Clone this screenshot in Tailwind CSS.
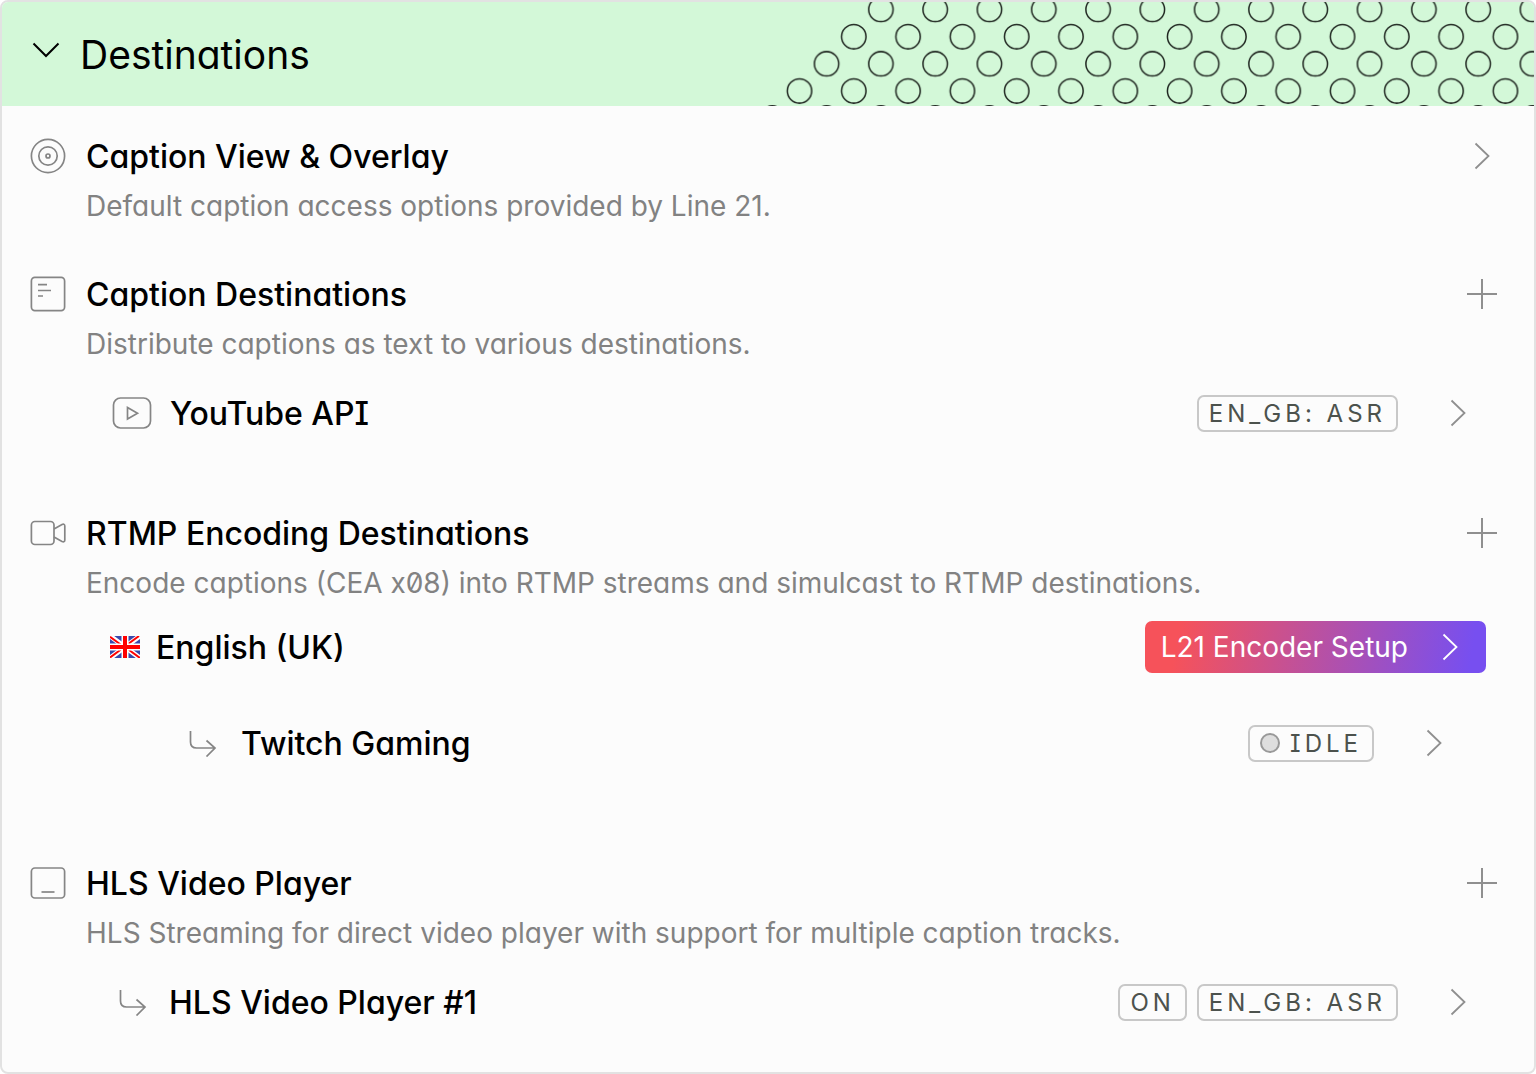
<!DOCTYPE html>
<html lang="en">
  <head>
    <meta charset="UTF-8" />
    <meta name="viewport" content="width=device-width, initial-scale=1.0" />
    <title>Destinations</title>
    <script src="https://cdn.jsdelivr.net/npm/@tailwindcss/browser@4"></script>
    <style>
      body {
        font-family: "Inter", sans-serif;
        font-feature-settings: "cv11", "cv08", "zero";
      }
    </style>
  </head>
  <body class="bg-white text-black">
    <!-- Shared icons -->
    <svg class="hidden">
      <symbol id="chevron" viewBox="0 0 32 32">
        <path d="M9.500 3.500l13 12.500-13 12.500" fill="none" stroke="currentColor" stroke-width="1.800" />
      </symbol>
      <symbol id="plus" viewBox="0 0 32 32">
        <path d="M16 1v30M1 16h30" fill="none" stroke="currentColor" stroke-width="2" />
      </symbol>
      <symbol id="branch" viewBox="0 0 28 28">
        <path d="M1.500 2v11q0 6 6 6h18M17.500 11.500l8.500 7.500-8.500 8.500" fill="none" stroke="currentColor" stroke-width="1.700" />
      </symbol>
    </svg>

    <main class="min-h-screen rounded-lg border-2 border-[#e2e2e2] bg-[#fcfcfc] overflow-hidden">
      <!-- Header -->
      <header class="relative h-26 bg-[#d3f8d8]">
        <svg class="absolute right-0 top-0 h-full w-[770px]" viewBox="0 0 770 104" aria-hidden="true">
          <defs>
            <pattern id="rings" width="54.3" height="54.3" patternUnits="userSpaceOnUse" patternTransform="translate(21.9 21.1)">
              <g fill="none" stroke="#1d241e" stroke-width="1.500">
                <circle cx="13.600" cy="13.600" r="12.200" />
                <circle cx="40.700" cy="40.700" r="12.200" />
              </g>
            </pattern>
          </defs>
          <path d="M97.500 0H770V104H-6.500Z" fill="url(#rings)" />
        </svg>
        <button class="relative flex h-full items-center gap-[18px] pl-7">
          <svg class="size-8 -mt-2" viewBox="0 0 32 32" fill="none" stroke="currentColor" stroke-width="2">
            <path d="M3.500 9.500l12.500 12.500 12.500-12.500" />
          </svg>
          <h1 class="pt-0.5 text-[39px] leading-12">Destinations</h1>
        </button>
      </header>

      <!-- Caption view -->
      <section class="mt-[25px]">
        <div class="flex items-center gap-5 pl-7 pr-9">
          <svg class="size-9 text-[#858585]" viewBox="0 0 36 36" fill="none" stroke="currentColor" stroke-width="1.700">
            <circle cx="18" cy="18" r="16.600" />
            <circle cx="18" cy="18" r="9.200" />
            <circle cx="18" cy="18" r="2" />
          </svg>
          <h2 class="flex-1 pt-0.5 text-[32px] leading-12 font-medium">Caption View &amp; Overlay</h2>
          <button class="text-[#8f8f8f]" aria-label="Open caption view">
            <svg class="size-8"><use href="#chevron" /></svg>
          </button>
        </div>
        <p class="pl-21 text-[28px] leading-[50px] text-[#828282]">Default caption access options provided by Line 21.</p>
      </section>

      <!-- Caption destinations -->
      <section class="mt-[38px]">
        <div class="flex items-center gap-5 pl-7 pr-9">
          <svg class="size-9 text-[#858585]" viewBox="0 0 36 36" fill="none" stroke="currentColor" stroke-width="1.700">
            <rect x="1.400" y="1.400" width="33.200" height="33.200" rx="3.500" />
            <path d="M8 8.700h9M8 14.500h13M8 20h5" />
          </svg>
          <h2 class="flex-1 pt-0.5 text-[32px] leading-12 font-medium">Caption Destinations</h2>
          <button class="text-[#8f8f8f]" aria-label="Add caption destination">
            <svg class="size-8"><use href="#plus" /></svg>
          </button>
        </div>
        <p class="pl-21 text-[28px] leading-[50px] text-[#828282]">Distribute captions as text to various destinations.</p>
        <div class="mt-[19px] flex items-center pl-[110px] pr-15">
          <svg class="h-8 w-10 text-[#858585]" viewBox="0 0 40 32" fill="none" stroke="currentColor" stroke-width="1.700">
            <rect x="1.500" y="1" width="37" height="30" rx="7" />
            <path d="M15.500 10.500v11.500l10-5.700z" />
          </svg>
          <h3 class="ml-[18px] flex-1 pt-0.5 text-[32px] leading-12 font-medium">YouTube API</h3>
          <span class="rounded-[7px] border-2 border-[#c8c8c8] px-2.5 text-2xl leading-[33px] tracking-[4px] text-[#4c524d]">EN_GB: ASR</span>
          <button class="ml-11 text-[#8f8f8f]" aria-label="Open YouTube API">
            <svg class="size-8"><use href="#chevron" /></svg>
          </button>
        </div>
      </section>

      <!-- RTMP destinations -->
      <section class="mt-[70px]">
        <div class="flex items-center gap-5 pl-7 pr-9">
          <svg class="size-9 text-[#858585]" viewBox="0 0 36 36" fill="none" stroke="currentColor" stroke-width="1.700">
            <rect x="1.400" y="6.500" width="22.600" height="23" rx="3.500" />
            <path d="M24 14l8-4.500q2.800-1 2.800 1.500v14q0 2.500-2.800 1.500L24 22" />
          </svg>
          <h2 class="flex-1 pt-0.5 text-[32px] leading-12 font-medium">RTMP Encoding Destinations</h2>
          <button class="text-[#8f8f8f]" aria-label="Add RTMP destination">
            <svg class="size-8"><use href="#plus" /></svg>
          </button>
        </div>
        <p class="pl-21 text-[28px] leading-[50px] text-[#828282]">Encode captions (CEA x08) into RTMP streams and simulcast to RTMP destinations.</p>
        <div class="mt-[13px] flex items-center pl-27 pr-12">
          <svg class="h-[22px] w-[30px]" viewBox="0 0 30 22" role="img" aria-label="United Kingdom">
            <path fill="#3949ab" d="M0 0h30v22H0z" />
            <path stroke="#fff" stroke-width="5" d="M0 0l30 22M30 0L0 22" />
            <path stroke="#f00" stroke-width="2" d="M0 0.800l15 11M15 11l15 11M29 0L15 10.200M15 10.500L0 21.500" />
            <path stroke="#fff" stroke-width="7" d="M15 0v22M0 11h30" />
            <path stroke="#f00" stroke-width="4" d="M15 0v22M0 11h30" />
          </svg>
          <h3 class="ml-4 flex-1 pt-0.5 text-[32px] leading-12 font-medium">English (UK)</h3>
          <button class="flex items-center rounded-[7px] bg-linear-100/srgb from-[#f6525a] from-10% to-[#774ff0] to-95% pl-4 pr-5 text-white">
            <span class="text-[28px] leading-[52px]">L21 Encoder Setup</span>
            <svg class="ml-[26px] size-8"><use href="#chevron" /></svg>
          </button>
        </div>
        <div class="mt-[45px] flex items-center pl-[187px] pr-21">
          <svg class="size-7 text-[#858585]"><use href="#branch" /></svg>
          <h3 class="ml-6 flex-1 pt-0.5 text-[32px] leading-12 font-medium">Twitch Gaming</h3>
          <span class="flex items-center gap-2.5 rounded-[7px] border-2 border-[#c8c8c8] px-2.5 text-2xl leading-[33px] tracking-[4px] text-[#4c524d]">
            <i class="size-5 rounded-full border-2 border-[#999] bg-[#dedede]"></i>IDLE
          </span>
          <button class="ml-11 text-[#8f8f8f]" aria-label="Open Twitch Gaming">
            <svg class="size-8"><use href="#chevron" /></svg>
          </button>
        </div>
      </section>

      <!-- HLS player -->
      <section class="mt-[90px] mb-10">
        <div class="flex items-center gap-5 pl-7 pr-9">
          <svg class="size-9 text-[#858585]" viewBox="0 0 36 36" fill="none" stroke="currentColor" stroke-width="1.700">
            <rect x="1.400" y="3" width="33.200" height="30" rx="3.500" />
            <path d="M11.500 27h13" />
          </svg>
          <h2 class="flex-1 pt-0.5 text-[32px] leading-12 font-medium">HLS Video Player</h2>
          <button class="text-[#8f8f8f]" aria-label="Add HLS video player">
            <svg class="size-8"><use href="#plus" /></svg>
          </button>
        </div>
        <p class="pl-21 text-[28px] leading-[50px] text-[#828282]">HLS Streaming for direct video player with support for multiple caption tracks.</p>
        <div class="mt-[19px] flex items-center pl-[117px] pr-15">
          <svg class="size-7 text-[#858585]"><use href="#branch" /></svg>
          <h3 class="ml-[22px] flex-1 pt-0.5 text-[32px] leading-12 font-medium">HLS Video Player #1</h3>
          <span class="mr-2.5 rounded-[7px] border-2 border-[#c8c8c8] px-2.5 text-2xl leading-[33px] tracking-[4px] text-[#4c524d]">ON</span>
          <span class="rounded-[7px] border-2 border-[#c8c8c8] px-2.5 text-2xl leading-[33px] tracking-[4px] text-[#4c524d]">EN_GB: ASR</span>
          <button class="ml-11 text-[#8f8f8f]" aria-label="Open HLS Video Player #1">
            <svg class="size-8"><use href="#chevron" /></svg>
          </button>
        </div>
      </section>
    </main>
  </body>
</html>
